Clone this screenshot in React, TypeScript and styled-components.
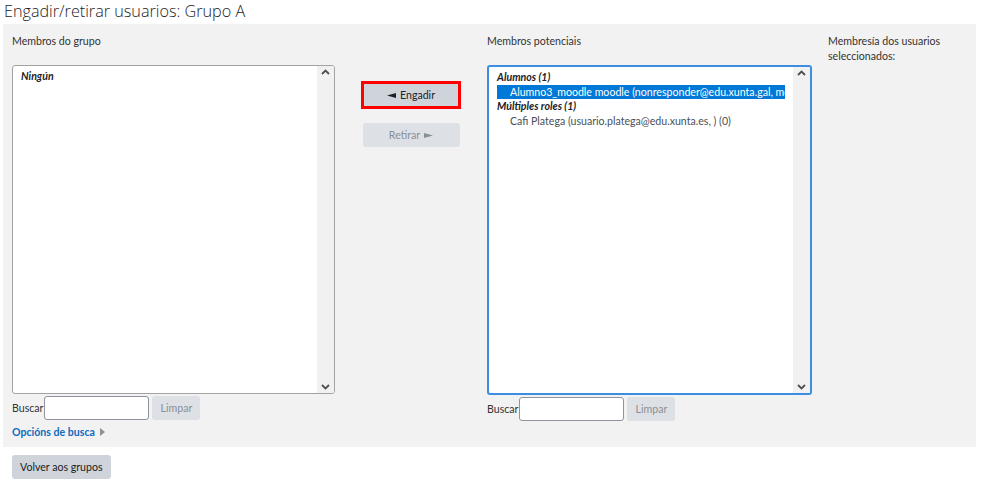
import React from "react";
import styled, { createGlobalStyle } from "styled-components";

const Global = createGlobalStyle`
  html, body { margin: 0; padding: 0; background: #fff; }
  body { font-family: "Lato", "Open Sans", sans-serif; color: #1d2125; }
`;

const Page = styled.div`
  width: 981px;
  padding: 0 0 0 3px;
  box-sizing: border-box;
`;

const Title = styled.h2`
  margin: 0;
  padding: 1px 0 0 1px;
  height: 24px;
  box-sizing: border-box;
  font-family: "Open Sans", sans-serif;
  font-weight: 300;
  font-size: 16.2px;
  line-height: 20px;
  color: #1d2125;
`;

const Panel = styled.div`
  width: 973px;
  height: 423px;
  background: #f2f2f2;
  display: grid;
  grid-template-columns: 323px 152px 325px 1fr;
  padding: 0 0 0 9px;
  box-sizing: border-box;
`;

const Column = styled.div`
  display: flex;
  flex-direction: column;
`;

const MiddleColumn = styled.div`
  display: flex;
  flex-direction: column;
  align-items: center;
  padding-top: 57px;
  gap: 14px;
`;

const SideColumn = styled.div`
  padding: 10px 0 0 16px;
  font-size: 10.6px;
  line-height: 15px;
  color: #333;
`;

const Label = styled.div`
  height: 41px;
  padding-top: 10px;
  box-sizing: border-box;
  font-size: 10.6px;
  line-height: 15px;
  color: #333;
`;

const ListBox = styled.div<{ $focused?: boolean }>`
  height: ${(p) => (p.$focused ? 330 : 329)}px;
  border: ${(p) => (p.$focused ? "2px solid #3c8ee0" : "1px solid #a3a3a3")};
  border-radius: 3px;
  background: #fff;
  display: flex;
  box-sizing: border-box;
  overflow: hidden;
`;

const ListContent = styled.div`
  flex: 1;
  min-width: 0;
  padding: 3px 8px 0 8px;
  font-size: 10.6px;
  line-height: 14.5px;
  color: #495057;
  overflow: hidden;
  white-space: nowrap;
`;

const Group = styled.div`
  font-weight: 700;
  font-style: italic;
  color: #1d2125;
`;

const Option = styled.div<{ $selected?: boolean }>`
  padding-left: 13px;
  background: ${(p) => (p.$selected ? "#0078d7" : "transparent")};
  color: ${(p) => (p.$selected ? "#fff" : "#495057")};
  overflow: hidden;
`;

const Scrollbar = styled.div`
  width: 17px;
  flex: none;
  background: #f1f1f1;
  display: flex;
  flex-direction: column;
  justify-content: space-between;
  align-items: center;
  padding: 3px 0 3px;
`;

const Chevron = ({ down }: { down?: boolean }) => (
  <svg width="9" height="6" viewBox="0 0 9 6">
    <path
      d={down ? "M1 1 L4.5 4.5 L8 1" : "M1 5 L4.5 1.5 L8 5"}
      fill="none"
      stroke="#505050"
      strokeWidth="1.8"
    />
  </svg>
);

const SearchRow = styled.div`
  display: flex;
  align-items: center;
  margin-top: 2px;
  height: 24px;
  font-size: 10.6px;
  color: #333;
`;

const SearchLabel = styled.span`
  margin-right: 1px;
`;

const SearchInput = styled.input`
  width: 105px;
  height: 24px;
  box-sizing: border-box;
  border: 1px solid #8f959e;
  border-radius: 3px;
  background: #fff;
  margin: 0 3px 0 0;
`;

const Button = styled.button<{ $disabled?: boolean }>`
  font-family: "Lato", "Open Sans", sans-serif;
  font-size: 10.6px;
  height: 24px;
  border: none;
  border-radius: 3px;
  background: ${(p) => (p.$disabled ? "#dde0e4" : "#ced4da")};
  color: ${(p) => (p.$disabled ? "#8a9097" : "#1d2125")};
  display: inline-flex;
  align-items: center;
  justify-content: center;
  gap: 4px;
  padding: 0 8px;
`;

const HighlightButton = styled(Button)`
  width: 100px;
  height: 28px;
  border: 3px solid #ff0000;
  border-radius: 0;
`;

const WideButton = styled(Button)`
  width: 97px;
`;

const LimparButton = styled(Button)`
  width: 48px;
`;

const OptionsLink = styled.div`
  margin-top: 6px;
  display: flex;
  align-items: center;
  gap: 5px;
  font-size: 10.6px;
  font-weight: 700;
  color: #0f6cbf;
`;

const Footer = styled.div`
  padding: 8px 0 0 9px;
`;

const Pointer = ({ right, color }: { right?: boolean; color: string }) => (
  <svg width="9" height="5" viewBox="0 0 9 5">
    <polygon points={right ? "0,0 9,2.5 0,5" : "9,0 0,2.5 9,5"} fill={color} />
  </svg>
);

export default function App() {
  return (
    <Page>
      <Global />
      <Title>Engadir/retirar usuarios: Grupo A</Title>
      <Panel>
        <Column>
          <Label>Membros do grupo</Label>
          <ListBox>
            <ListContent>
              <Group>Ningún</Group>
            </ListContent>
            <Scrollbar>
              <Chevron />
              <Chevron down />
            </Scrollbar>
          </ListBox>
          <SearchRow>
            <SearchLabel>Buscar</SearchLabel>
            <SearchInput type="text" />
            <LimparButton $disabled>Limpar</LimparButton>
          </SearchRow>
          <OptionsLink>
            Opcións de busca
            <svg width="5" height="8" viewBox="0 0 5 8">
              <polygon points="0,0 5,4 0,8" fill="#8a9097" />
            </svg>
          </OptionsLink>
        </Column>
        <MiddleColumn>
          <HighlightButton>
            <Pointer color="#1d2125" /> Engadir
          </HighlightButton>
          <WideButton $disabled>
            Retirar <Pointer right color="#8a9097" />
          </WideButton>
        </MiddleColumn>
        <Column>
          <Label>Membros potenciais</Label>
          <ListBox $focused>
            <ListContent>
              <Group>Alumnos (1)</Group>
              <Option $selected>
                Alumno3_moodle moodle (nonresponder@edu.xunta.gal, moodle)
              </Option>
              <Group>Múltiples roles (1)</Group>
              <Option>Cafi Platega (usuario.platega@edu.xunta.es, ) (0)</Option>
            </ListContent>
            <Scrollbar>
              <Chevron />
              <Chevron down />
            </Scrollbar>
          </ListBox>
          <SearchRow>
            <SearchLabel>Buscar</SearchLabel>
            <SearchInput type="text" />
            <LimparButton $disabled>Limpar</LimparButton>
          </SearchRow>
        </Column>
        <SideColumn>
          Membresía dos usuarios
          <br />
          seleccionados:
        </SideColumn>
      </Panel>
      <Footer>
        <Button>Volver aos grupos</Button>
      </Footer>
    </Page>
  );
}
